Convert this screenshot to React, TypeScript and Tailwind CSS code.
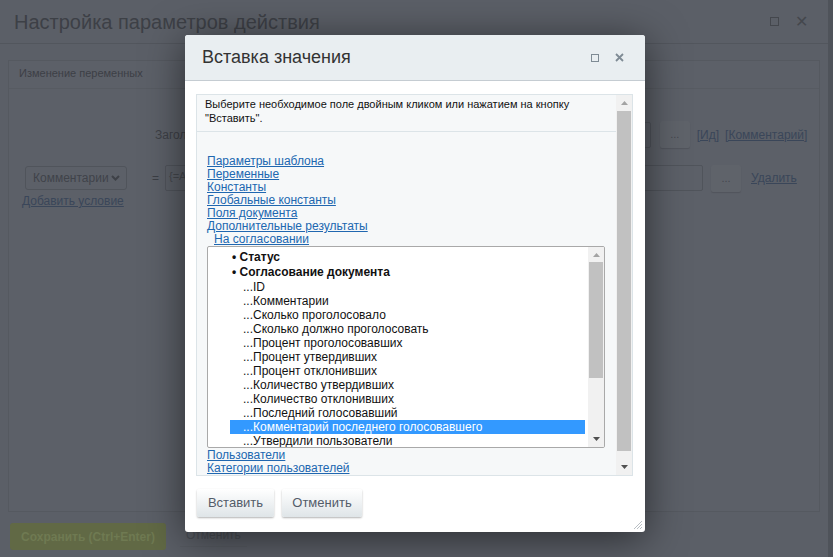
import React from 'react'

const LINKS = [
  'Параметры шаблона',
  'Переменные',
  'Константы',
  'Глобальные константы',
  'Поля документа',
  'Дополнительные результаты',
]

const OPTIONS = [
  'ID',
  'Комментарии',
  'Сколько проголосовало',
  'Сколько должно проголосовать',
  'Процент проголосовавших',
  'Процент утвердивших',
  'Процент отклонивших',
  'Количество утвердивших',
  'Количество отклонивших',
  'Последний голосовавший',
  'Комментарий последнего голосовавшего',
  'Утвердили пользователи',
]

const SELECTED = 'Комментарий последнего голосовавшего'

function Arrow({ up, color }: { up?: boolean; color: string }) {
  return (
    <svg width="7" height="4" viewBox="0 0 7 4" className="block">
      <polygon points={up ? '0,4 7,4 3.5,0' : '0,0 7,0 3.5,4'} fill={color} />
    </svg>
  )
}

function Grip() {
  return (
    <svg width="11" height="11" viewBox="0 0 11 11" className="block">
      <path d="M10 2 L2 10 M10 5 L5 10 M10 8 L8 10" stroke="#b9bfc4" strokeWidth="1" />
    </svg>
  )
}

function BgPage() {
  return (
    <div className="flex h-full w-[828px] flex-col bg-[#5b5f67] text-[#3c3f46]">
      {/* header */}
      <div className="flex h-[44px] shrink-0 items-center justify-between border-b border-[#52565d] pl-[14px] pr-[20px]">
        <span className="text-[20px] text-[#3d4046]">Настройка параметров действия</span>
        <div className="flex items-center gap-[16px] text-[#44474d]">
          <span className="block h-[9px] w-[9px] border border-[#44474d]" />
          <span className="text-[16px] leading-none">✕</span>
        </div>
      </div>

      {/* panel */}
      <div className="px-[8px] pt-[16px]">
        <div className="h-[452px] border border-[#555960] bg-[#5c6068]">
          <div className="border-b border-[#575b62] pb-[8px] pl-[10px] pt-[5px] text-[11px] leading-[14px]">
            Изменение переменных
          </div>

          {/* row: title */}
          <div className="mt-[32px] flex h-[27px] items-center">
            <span className="ml-[146px] text-[12px] text-[#3e4147]">Заголовок:</span>
            <div className="ml-[10px] h-[26px] w-[426px] rounded-[2px] border border-[#50545b]" />
            <div className="ml-[9px] flex h-[27px] w-[30px] items-center justify-center rounded-[2px] bg-[#5f636a] text-[11px] text-[#45484e] shadow-[0_1px_1px_rgba(0,0,0,0.12)]">
              ...
            </div>
            <span className="ml-[7px] text-[12px] text-[#3a4659] underline">[Ид]</span>
            <span className="ml-[6px] text-[12px] text-[#3a4659] underline">[Комментарий]</span>
          </div>

          {/* row: condition */}
          <div className="mt-[16px] flex h-[28px] items-center">
            <div className="ml-[16px] flex h-[24px] w-[102px] items-center justify-between rounded-[3px] border border-[#50545b] pl-[7px] pr-[6px] text-[12px] text-[#40434a]">
              Комментарии
              <svg width="9" height="6" viewBox="0 0 9 6">
                <path d="M1 1 L4.5 4.5 L8 1" stroke="#3e4147" strokeWidth="2" fill="none" />
              </svg>
            </div>
            <span className="ml-[25px] text-[12px]">=</span>
            <div className="ml-[6px] h-[26px] w-[538px] rounded-[2px] border border-[#50545b] pl-[3px] text-[11px] leading-[20px] text-[#44474d]">
              {'{=A'}
            </div>
            <div className="ml-[8px] flex h-[27px] w-[30px] items-center justify-center rounded-[2px] bg-[#5f636a] text-[11px] text-[#45484e] shadow-[0_1px_1px_rgba(0,0,0,0.12)]">
              ...
            </div>
            <span className="ml-[10px] text-[12px] text-[#3a4659] underline">Удалить</span>
          </div>

          <div className="ml-[13px] text-[12px] text-[#3a4659] underline">Добавить условие</div>
        </div>
      </div>

      {/* footer */}
      <div className="flex items-center pl-[10px] pt-[11px]">
        <div className="flex h-[27px] w-[156px] items-center justify-center rounded-[3px] bg-[#616945] text-[12px] font-bold text-[#6f7a52]">
          Сохранить (Ctrl+Enter)
        </div>
        <span className="ml-[14px] border-b border-[#575b62] px-[6px] pb-[2px] text-[12px] text-[#4a4e55]">
          Отменить
        </span>
      </div>
    </div>
  )
}

function ListBox() {
  return (
    <div className="flex h-[202px] w-[398px] overflow-hidden rounded-[2px] border border-[#a9a9a9] bg-white">
      <div className="flex-1 overflow-hidden pt-[3px] text-[12px] text-[#111]">
        <div className="h-[15px] pl-[24px] font-bold leading-[15px]">• Статус</div>
        <div className="h-[15px] pl-[24px] font-bold leading-[15px]">• Согласование документа</div>
        {OPTIONS.map((o) => (
          <div
            key={o}
            className={
              o === SELECTED
                ? 'ml-[22px] mr-[3px] h-[14px] whitespace-nowrap bg-[#3399ff] pl-[13px] leading-[14px] text-white'
                : 'ml-[22px] mr-[3px] h-[14px] whitespace-nowrap pl-[13px] leading-[14px]'
            }
          >
            ...{o}
          </div>
        ))}
      </div>
      <div className="flex w-[16px] flex-col bg-[#f1f1f1]">
        <div className="flex h-[15px] items-center justify-center">
          <Arrow up color="#a3a3a3" />
        </div>
        <div className="mx-[1px] h-[116px] bg-[#c1c1c1]" />
        <div className="flex-1" />
        <div className="flex h-[16px] items-center justify-center">
          <Arrow color="#505050" />
        </div>
      </div>
    </div>
  )
}

function Dialog() {
  return (
    <div className="absolute left-[185px] top-[35px] flex h-[497px] w-[460px] flex-col rounded-[3px] bg-white shadow-[0_6px_40px_rgba(0,0,0,0.55)]">
      <div className="flex h-[46px] shrink-0 items-center justify-between rounded-t-[3px] border-b border-[#c5ccd2] bg-[#e9eef1] pl-[17px] pr-[21px]">
        <span className="text-[18px] text-[#333]">Вставка значения</span>
        <div className="flex items-center gap-[16px]">
          <span className="block h-[8px] w-[8px] border border-[#7f8b95]" />
          <svg width="9" height="9" viewBox="0 0 9 9">
            <path d="M1 1 L8 8 M8 1 L1 8" stroke="#7f8b95" strokeWidth="1.8" />
          </svg>
        </div>
      </div>

      <div className="pl-[11px] pr-[12px] pt-[13px]">
        <div className="flex h-[382px] border border-[#dce4e8] bg-[#f6f8f9]">
          <div className="flex-1 overflow-hidden">
            <div className="border-b border-[#dce4e8] px-[8px] pb-[6px] pt-[2px] text-[11px] leading-[14px] text-[#111]">
              Выберите необходимое поле двойным кликом или нажатием на кнопку "Вставить".
            </div>
            <div className="pl-[10px] pt-[23px] text-[12px] leading-[13px] text-[#2067b0]">
              {LINKS.map((l) => (
                <div key={l}>
                  <span className="underline">{l}</span>
                </div>
              ))}
              <div className="pl-[7px]">
                <span className="underline">На согласовании</span>
              </div>
              <div>
                <ListBox />
              </div>
              <div className="mt-[1px]">
                <span className="underline">Пользователи</span>
              </div>
              <div>
                <span className="underline">Категории пользователей</span>
              </div>
            </div>
          </div>
          <div className="flex w-[16px] flex-col bg-[#f1f1f1]">
            <div className="flex h-[16px] items-center justify-center">
              <Arrow up color="#a3a3a3" />
            </div>
            <div className="mx-[1px] h-[340px] bg-[#c1c1c1]" />
            <div className="flex-1" />
            <div className="flex h-[16px] items-center justify-center">
              <Arrow color="#505050" />
            </div>
          </div>
        </div>

        <div className="ml-[1px] mt-[13px] flex gap-[8px]">
          <button className="h-[28px] w-[77px] rounded-[2px] bg-gradient-to-b from-white to-[#dfe5e8] text-[13px] text-[#535c69] shadow-[0_1px_2px_rgba(0,0,0,0.3)]">
            Вставить
          </button>
          <button className="h-[28px] w-[80px] rounded-[2px] bg-gradient-to-b from-white to-[#dfe5e8] text-[13px] text-[#535c69] shadow-[0_1px_2px_rgba(0,0,0,0.3)]">
            Отменить
          </button>
        </div>
      </div>

      <div className="absolute bottom-[2px] right-[2px]">
        <Grip />
      </div>
    </div>
  )
}

export default function App() {
  return (
    <div className="relative h-[557px] w-[833px] overflow-hidden bg-[#4f535a] font-['Liberation_Sans',Arial,sans-serif]">
      <BgPage />
      <Dialog />
    </div>
  )
}
